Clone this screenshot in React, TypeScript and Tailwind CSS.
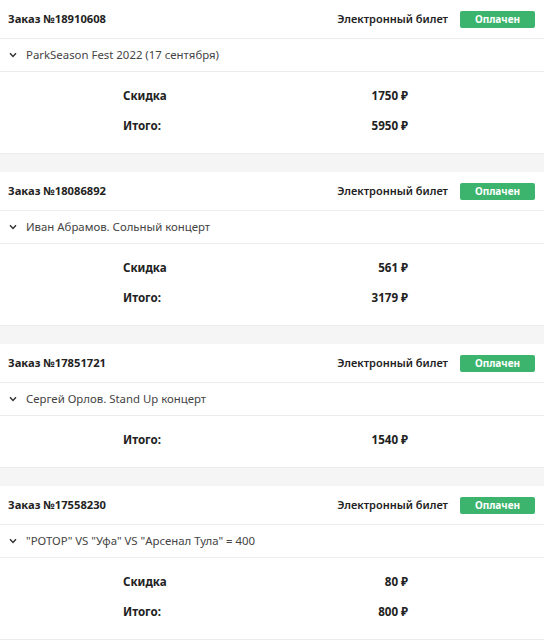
import React from "react";

type Order = {
  id: string;
  event: string;
  rows: { label: string; value: string }[];
};

const orders: Order[] = [
  {
    id: "18910608",
    event: "ParkSeason Fest 2022 (17 сентября)",
    rows: [
      { label: "Скидка", value: "1750 ₽" },
      { label: "Итого:", value: "5950 ₽" },
    ],
  },
  {
    id: "18086892",
    event: "Иван Абрамов. Сольный концерт",
    rows: [
      { label: "Скидка", value: "561 ₽" },
      { label: "Итого:", value: "3179 ₽" },
    ],
  },
  {
    id: "17851721",
    event: "Сергей Орлов. Stand Up концерт",
    rows: [{ label: "Итого:", value: "1540 ₽" }],
  },
  {
    id: "17558230",
    event: "\"РОТОР\" VS \"Уфа\" VS \"Арсенал Тула\" = 400",
    rows: [
      { label: "Скидка", value: "80 ₽" },
      { label: "Итого:", value: "800 ₽" },
    ],
  },
];

function Chevron() {
  return (
    <svg width="8" height="6" viewBox="0 0 8 6" className="shrink-0">
      <path d="M1 1.3 L4 4.4 L7 1.3" fill="none" stroke="#333" strokeWidth="1.5" />
    </svg>
  );
}

function OrderCard({ o }: { o: Order }) {
  return (
    <div className="bg-white">
      <div className="flex items-center justify-between h-[39px] pl-2 pr-[9px] border-b border-[#ececec]">
        <div className="text-[11.2px] font-bold text-[#222]">Заказ №{o.id}</div>
        <div className="flex items-center">
          <span className="text-[11px] font-semibold text-[#222] mr-[12px]">Электронный билет</span>
          <span className="w-[75px] h-[17px] rounded-[2px] bg-[#3db46d] text-white text-[10px] font-bold flex items-center justify-center">
            Оплачен
          </span>
        </div>
      </div>
      <div className="flex items-center h-[33px] pl-[9px] gap-[9px] border-b border-[#ececec]">
        <Chevron />
        <span className="text-[11.4px] text-[#444]">{o.event}</span>
      </div>
      <div className="pt-[9px] pb-[12px] border-b border-[#ececec]">
        {o.rows.map((r) => (
          <div key={r.label} className="flex items-center h-[30px]">
            <div className="pl-[123px] w-[340px] text-[11.6px] font-bold text-[#222]">{r.label}</div>
            <div className="w-[68px] text-right text-[11.6px] font-bold text-[#222]">{r.value}</div>
          </div>
        ))}
      </div>
    </div>
  );
}

export default function App() {
  return (
    <div
      className="w-[544px] h-[640px] overflow-hidden bg-[#f5f5f5] flex flex-col gap-[18px]"
      style={{ fontFamily: '"Noto Sans", "Open Sans", sans-serif' }}
    >
      {orders.map((o) => (
        <OrderCard key={o.id} o={o} />
      ))}
    </div>
  );
}
